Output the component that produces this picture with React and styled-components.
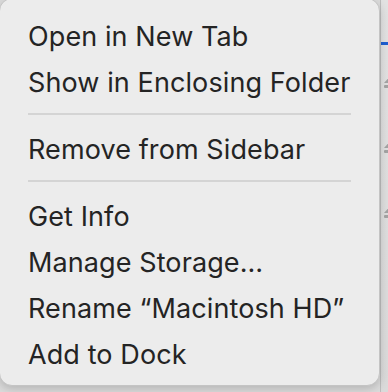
import React from "react";
import styled, { createGlobalStyle } from "styled-components";

const Global = createGlobalStyle`
  html, body {
    margin: 0;
    padding: 0;
    background: #dcdcdc;
    overflow: hidden;
  }
  body {
    width: 388px;
    height: 392px;
  }
`;

const Page = styled.div`
  display: flex;
  width: 388px;
  height: 392px;
  overflow: hidden;
`;

const Menu = styled.div`
  flex: 0 0 381px;
  margin: -2px 0 0 -1px;
  height: 388px;
  box-sizing: border-box;
  padding: 14px 0 0 0;
  background: #ececec;
  border: 1px solid #c4c4c4;
  border-radius: 13px;
  box-shadow: 0 3px 10px rgba(0, 0, 0, 0.18);
  position: relative;
  z-index: 1;
  font-family: Inter, "Liberation Sans", sans-serif;
  color: #242424;
`;

const Item = styled.div`
  height: 46px;
  line-height: 46px;
  padding: 1px 0 0 28px;
  box-sizing: border-box;
  font-size: 27px;
  letter-spacing: 0.1px;
  white-space: nowrap;
`;

const Separator = styled.div`
  height: 21px;
  box-sizing: border-box;
  display: flex;
  align-items: center;
  padding: 0 28px 4px 28px;
  &::after {
    content: "";
    flex: 1;
    height: 2px;
    background: #d4d4d4;
  }
`;

const Strip = styled.div`
  flex: 1;
  display: flex;
  flex-direction: column;
  background: linear-gradient(#e2e2e2, #dadada);
  border-left: 1px solid #bdbdbd;
  overflow: hidden;
`;

const BlueBar = styled.div`
  height: 3px;
  margin-top: 42px;
  background: #1f5fd1;
`;

const Eject = styled.svg`
  display: block;
  flex: 0 0 auto;
  margin: ${(p) => p.$top}px 0 0 2px;
  width: 16px;
  height: 16px;
`;

function EjectIcon({ top }) {
  return (
    <Eject $top={top} viewBox="0 0 16 16">
      <path d="M8 1 L15 9 H1 Z" fill="#a3a3a3" />
      <rect x="1" y="11" width="14" height="3" rx="1" fill="#a3a3a3" />
    </Eject>
  );
}

const items = [
  ["Open in New Tab", "Show in Enclosing Folder"],
  ["Remove from Sidebar"],
  ["Get Info", "Manage Storage…", "Rename “Macintosh HD”", "Add to Dock"],
];

export default function App() {
  return (
    <Page>
      <Global />
      <Menu>
        {items.map((group, gi) => (
          <React.Fragment key={gi}>
            {gi > 0 && <Separator />}
            {group.map((label) => (
              <Item key={label}>{label}</Item>
            ))}
          </React.Fragment>
        ))}
      </Menu>
      <Strip>
        <BlueBar />
        <EjectIcon top={29} />
        <EjectIcon top={49} />
        <EjectIcon top={49} />
      </Strip>
    </Page>
  );
}
